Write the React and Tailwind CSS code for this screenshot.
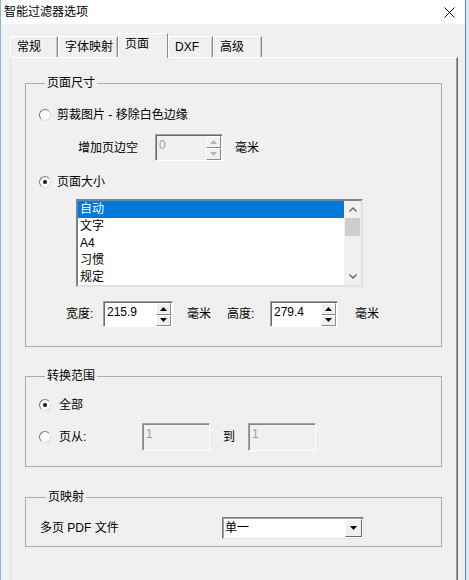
import React from "react";

const Radio = ({ checked }) => (
  <span className="w-[12px] h-[12px] rounded-full border border-[#7a7a7a] border-r-[#dcdcdc] border-b-[#dcdcdc] bg-[#fbfbfb] flex items-center justify-center shrink-0">
    {checked && <span className="w-[4px] h-[4px] rounded-full bg-[#1a1a1a]" />}
  </span>
);

const Arrow = ({ up, color = "#000" }) => (
  <svg width="7" height="4" viewBox="0 0 7 4">
    <polygon points={up ? "0,4 3.5,0 7,4" : "0,0 7,0 3.5,4"} fill={color} />
  </svg>
);

const SpinBtn = ({ up, disabled }) => (
  <div className="flex-1 bg-[#f0f0f0] border border-white border-r-[#8a8a8a] border-b-[#8a8a8a] flex items-center justify-center">
    <Arrow up={up} color={disabled ? "#b5b5b5" : "#000"} />
  </div>
);

const SpinBox = ({ value, disabled, className }) => (
  <div
    className={`${className} flex border border-[#a0a0a0] border-r-white border-b-white shadow-[inset_1px_1px_0_#696969] ${
      disabled ? "bg-[#f0f0f0] text-[#a0a0a0]" : "bg-white"
    }`}
  >
    <div className="flex-1 pl-[3px] pt-[2px] leading-[16px]">{value}</div>
    <div className="w-[16px] flex flex-col pt-[1px] pr-[1px]">
      <SpinBtn up disabled={disabled} />
      <SpinBtn disabled={disabled} />
    </div>
  </div>
);

const TextBox = ({ value, className }) => (
  <div className={`${className} border border-[#a0a0a0] border-r-white border-b-white shadow-[inset_1px_1px_0_#8a8a8a] bg-[#f0f0f0] text-[#a0a0a0] pl-[3px] pt-[2px] leading-[16px]`}>
    {value}
  </div>
);

const Group = ({ title, children, className }) => (
  <fieldset className={`border border-[#adadad] ${className}`}>
    <legend className="ml-[6px] px-[2px] leading-[16px]">{title}</legend>
    {children}
  </fieldset>
);

const tabs = [
  { label: "常规", w: "w-[48px]" },
  { label: "字体映射", w: "w-[60px]" },
  { label: "页面", w: "w-[50px]", active: true },
  { label: "DXF", w: "w-[45px]" },
  { label: "高级", w: "w-[49px]" },
];

const sizes = ["自动", "文字", "A4", "习惯", "规定"];

export default function App() {
  return (
    <div className="w-[469px] h-[580px] flex bg-[#dcdcdc] overflow-hidden text-[12px] text-black font-[family-name:'Liberation_Sans','Noto_Sans_CJK_SC',sans-serif]">
      <div className="w-[466px] h-[600px] shrink-0 flex flex-col border-l border-l-[#8fb5d8] border-r border-r-[#3a96de]">
        {/* title bar */}
        <div className="h-[24px] bg-white flex items-center justify-between pl-[3px] pr-[10px]">
          <span className="leading-[16px]">智能过滤器选项</span>
          <svg width="11" height="11" viewBox="0 0 11 11">
            <path d="M0.5 0.5 L10.5 10.5 M10.5 0.5 L0.5 10.5" stroke="#111" strokeWidth="1" />
          </svg>
        </div>

        {/* body */}
        <div className="flex-1 bg-[#f0f0f0] flex flex-col pl-[9px] pr-[7px]">
          <div className="h-[33px] flex items-end shrink-0">
            {tabs.map((t) =>
              t.active ? (
                <div
                  key={t.label}
                  className={`${t.w} h-[25px] -mb-px relative z-10 bg-[#f0f0f0] border-t border-l border-white border-r border-r-[#8a8a8a] pl-[6px] pt-[2px] leading-[16px]`}
                >
                  {t.label}
                </div>
              ) : (
                <div
                  key={t.label}
                  className={`${t.w} h-[21px] bg-[#f0f0f0] border-t border-l border-white border-r border-r-[#8a8a8a] shadow-[inset_-1px_0_0_#c8c8c8] pl-[6px] pt-[2px] leading-[16px]`}
                >
                  {t.label}
                </div>
              )
            )}
          </div>

          {/* tab panel */}
          <div className="flex-1 border-t border-l border-t-white border-l-[#e2e2e2] border-r border-r-[#696969] shadow-[inset_-1px_0_0_#a0a0a0] pl-[14px] pr-[15px] pt-[17px] flex flex-col">
            <Group title="页面尺寸" className="pl-[13px] pb-[19px]">
              <div className="mt-[16px] h-[16px] flex items-center gap-[6px]">
                <Radio />
                <span className="leading-[16px]">剪裁图片 - 移除白色边缘</span>
              </div>
              <div className="mt-[11px] pl-[39px] flex items-center">
                <span className="w-[77px] leading-[16px]">增加页边空</span>
                <SpinBox value="0" disabled className="w-[68px] h-[27px]" />
                <span className="ml-[12px] leading-[16px]">毫米</span>
              </div>
              <div className="mt-[13px] h-[16px] flex items-center gap-[6px]">
                <Radio checked />
                <span className="leading-[16px]">页面大小</span>
              </div>
              <div className="mt-[9px] ml-[37px] w-[287px] h-[88px] flex bg-white border-2 border-[#828282] border-r-[#e3e3e3] border-b-[#e3e3e3]">
                <div className="flex-1 flex flex-col">
                  {sizes.map((s, i) => (
                    <div
                      key={s}
                      className={`h-[17px] leading-[17px] pl-[2px] ${i === 0 ? "bg-[#0078d7] text-white" : ""}`}
                    >
                      {s}
                    </div>
                  ))}
                </div>
                <div className="w-[17px] bg-[#f0f0f0] flex flex-col items-center">
                  <div className="h-[17px] flex items-center justify-center">
                    <svg width="8" height="5" viewBox="0 0 8 5">
                      <path d="M0.5 4.5 L4 1 L7.5 4.5" stroke="#606060" strokeWidth="1.3" fill="none" />
                    </svg>
                  </div>
                  <div className="w-[15px] h-[18px] bg-[#cdcdcd]" />
                  <div className="flex-1" />
                  <div className="h-[17px] flex items-center justify-center">
                    <svg width="8" height="5" viewBox="0 0 8 5">
                      <path d="M0.5 0.5 L4 4 L7.5 0.5" stroke="#606060" strokeWidth="1.3" fill="none" />
                    </svg>
                  </div>
                </div>
              </div>
              <div className="mt-[14px] pl-[27px] flex items-center">
                <span className="w-[37px] leading-[16px]">宽度:</span>
                <SpinBox value="215.9" className="w-[70px] h-[26px]" />
                <span className="ml-[14px] w-[40px] leading-[16px]">毫米</span>
                <span className="w-[43px] leading-[16px]">高度:</span>
                <SpinBox value="279.4" className="w-[68px] h-[26px]" />
                <span className="ml-[17px] leading-[16px]">毫米</span>
              </div>
            </Group>

            <Group title="转换范围" className="mt-[21px] pl-[13px] pb-[15px]">
              <div className="mt-[13px] h-[16px] flex items-center gap-[8px]">
                <Radio checked />
                <span className="leading-[16px]">全部</span>
              </div>
              <div className="mt-[10px] h-[28px] flex items-center">
                <Radio />
                <span className="ml-[8px] w-[83px] leading-[16px]">页从:</span>
                <TextBox value="1" className="w-[68px] h-[28px]" />
                <span className="ml-[13px] w-[25px] leading-[16px]">到</span>
                <TextBox value="1" className="w-[68px] h-[28px]" />
              </div>
            </Group>

            <Group title="页映射" className="mt-[22px] pl-[14px] pb-[7px]">
              <div className="mt-[12px] h-[22px] flex items-center">
                <span className="w-[182px] leading-[16px]">多页 PDF 文件</span>
                <div className="w-[142px] h-[22px] flex bg-white border border-[#7a7a7a] border-r-[#e3e3e3] border-b-[#e3e3e3] shadow-[inset_1px_1px_0_#a0a0a0]">
                  <div className="flex-1 pl-[2px] pt-[2px] leading-[16px]">单一</div>
                  <div className="w-[17px] m-[1px] bg-[#f0f0f0] border border-white border-r-[#696969] border-b-[#696969] flex items-center justify-center">
                    <Arrow />
                  </div>
                </div>
              </div>
            </Group>
          </div>
        </div>
      </div>
      <div className="flex-1 bg-[#e6e6e6]" />
    </div>
  );
}
